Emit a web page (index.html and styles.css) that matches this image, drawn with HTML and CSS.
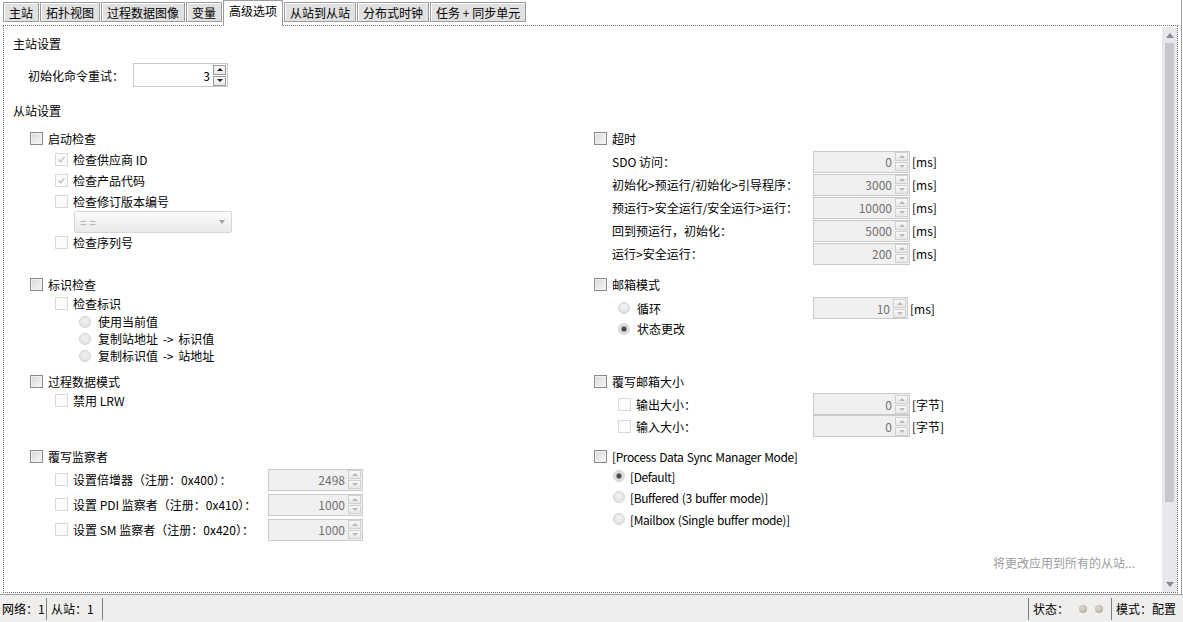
FILE: index.html
```html
<!DOCTYPE html>
<html lang="zh-CN">
<head>
  <meta charset="UTF-8">
  <meta name="viewport" content="width=device-width, initial-scale=1.0">
  <title>高级选项</title>
  <link rel="stylesheet" href="styles.css">
</head>
<body>
  <div class="window">
    <div class="tabs">
      <div class="tab">主站</div>
      <div class="tab">拓扑视图</div>
      <div class="tab">过程数据图像</div>
      <div class="tab">变量</div>
      <div class="tab active">高级选项</div>
      <div class="tab">从站到从站</div>
      <div class="tab">分布式时钟</div>
      <div class="tab">任务&nbsp;+&nbsp;同步单元</div>
    </div>

    <div class="main">
      <div class="panel">
        <div class="content">
          <div class="section-title">主站设置</div>
          <div class="master-row">
            <span class="master-label">初始化命令重试：</span>
            <div class="spin enabled"><span class="val">3</span><span class="btns"><i class="up"></i><i class="down"></i></span></div>
          </div>

          <div class="section-title slave-title">从站设置</div>

          <div class="groups">
            <!-- startup checks -->
            <div class="cell">
              <div class="line h20"><span class="cb"></span>启动检查</div>
              <div class="line h22 sub"><span class="cb off"><svg viewBox="0 0 13 13"><polyline points="3,6.5 5.5,9.2 10,3.6"/></svg></span>检查供应商 ID</div>
              <div class="line h21 sub"><span class="cb off"><svg viewBox="0 0 13 13"><polyline points="3,6.5 5.5,9.2 10,3.6"/></svg></span>检查产品代码</div>
              <div class="line h20 sub"><span class="cb off"></span>检查修订版本编号</div>
              <div class="line h21 combo-row"><div class="combo"><span>= =</span><i></i></div></div>
              <div class="line h20 sub"><span class="cb off"></span>检查序列号</div>
            </div>
            <div class="cell">
              <div class="line h20"><span class="cb"></span>超时</div>
              <div class="line h23 field first"><span class="lbl w201">SDO 访问：</span><div class="spin w97"><span class="val">0</span><span class="btns"><i class="up"></i><i class="down"></i></span></div><span class="unit">[ms]</span></div>
              <div class="line h23 field"><span class="lbl w201">初始化&gt;预运行/初始化&gt;引导程序：</span><div class="spin w97"><span class="val">3000</span><span class="btns"><i class="up"></i><i class="down"></i></span></div><span class="unit">[ms]</span></div>
              <div class="line h23 field"><span class="lbl w201">预运行&gt;安全运行/安全运行&gt;运行：</span><div class="spin w97"><span class="val">10000</span><span class="btns"><i class="up"></i><i class="down"></i></span></div><span class="unit">[ms]</span></div>
              <div class="line h23 field"><span class="lbl w201">回到预运行，初始化：</span><div class="spin w97"><span class="val">5000</span><span class="btns"><i class="up"></i><i class="down"></i></span></div><span class="unit">[ms]</span></div>
              <div class="line h23 field"><span class="lbl w201">运行&gt;安全运行：</span><div class="spin w97"><span class="val">200</span><span class="btns"><i class="up"></i><i class="down"></i></span></div><span class="unit">[ms]</span></div>
            </div>

            <!-- identification / mailbox -->
            <div class="cell">
              <div class="line h20"><span class="cb"></span>标识检查</div>
              <div class="line h19 sub"><span class="cb off"></span>检查标识</div>
              <div class="line h17 sub2"><span class="rb"></span>使用当前值</div>
              <div class="line h17 sub2 wide"><span class="rb"></span>复制站地址 -&gt; 标识值</div>
              <div class="line h17 sub2 wide"><span class="rb"></span>复制标识值 -&gt; 站地址</div>
            </div>
            <div class="cell">
              <div class="line h20"><span class="cb"></span>邮箱模式</div>
              <div class="line h22 rsub gap3"><span class="rb"></span><span class="lbl w176">循环</span><div class="spin w95"><span class="val">10</span><span class="btns"><i class="up"></i><i class="down"></i></span></div><span class="unit">[ms]</span></div>
              <div class="line h19 rsub"><span class="rb sel"></span>状态更改</div>
            </div>

            <!-- process data / mailbox size -->
            <div class="cell">
              <div class="line h20"><span class="cb"></span>过程数据模式</div>
              <div class="line h19 sub"><span class="cb off"></span>禁用 LRW</div>
            </div>
            <div class="cell">
              <div class="line h20"><span class="cb"></span>覆写邮箱大小</div>
              <div class="line h22 rsub first"><span class="cb off"></span><span class="lbl w177">输出大小：</span><div class="spin w97"><span class="val">0</span><span class="btns"><i class="up"></i><i class="down"></i></span></div><span class="unit">[字节]</span></div>
              <div class="line h22 rsub"><span class="cb off"></span><span class="lbl w177">输入大小：</span><div class="spin w97"><span class="val">0</span><span class="btns"><i class="up"></i><i class="down"></i></span></div><span class="unit">[字节]</span></div>
            </div>

            <!-- watchdog / sync manager -->
            <div class="cell">
              <div class="line h20"><span class="cb"></span>覆写监察者</div>
              <div class="line h25 sub gap1"><span class="cb off"></span><span class="lbl w195">设置倍增器（注册：0x400）：</span><div class="spin w95"><span class="val">2498</span><span class="btns"><i class="up"></i><i class="down"></i></span></div></div>
              <div class="line h25 sub"><span class="cb off"></span><span class="lbl w195">设置 PDI 监察者（注册：0x410）：</span><div class="spin w95"><span class="val">1000</span><span class="btns"><i class="up"></i><i class="down"></i></span></div></div>
              <div class="line h25 sub"><span class="cb off"></span><span class="lbl w195">设置 SM 监察者（注册：0x420）：</span><div class="spin w95"><span class="val">1000</span><span class="btns"><i class="up"></i><i class="down"></i></span></div></div>
            </div>
            <div class="cell">
              <div class="line h20 latin"><span class="cb"></span>[Process Data Sync Manager Mode]</div>
              <div class="line h20 rsub2 latin"><span class="rb sel"></span>[Default]</div>
              <div class="line h22 rsub2 latin"><span class="rb"></span>[Buffered (3 buffer mode)]</div>
              <div class="line h22 rsub2 latin"><span class="rb"></span>[Mailbox (Single buffer mode)]</div>
            </div>
          </div>

          <div class="apply">将更改应用到所有的从站...</div>
        </div>

        <div class="vscroll">
          <div class="arrow up"></div>
          <div class="thumb"></div>
          <div class="track"></div>
          <div class="arrow down"></div>
        </div>
      </div>
    </div>
  </div>

  <div class="status">
    <div class="st-item net">网络：1</div>
    <div class="st-item slaves">从站：1</div>
    <div class="st-item state">状态：<span class="dot"></span><span class="dot"></span></div>
    <div class="st-item mode">模式：配置</div>
  </div>
</body>
</html>
```

FILE: styles.css
```css
body {
  margin: 0;
  width: 1183px;
  height: 622px;
  overflow: hidden;
  background: #fff;
  color: #000;
  font-family: "Noto Sans CJK SC", "Noto Sans", sans-serif;
  font-size: 12px;
}

.window {
  width: 1182px;
  height: 594px;
  box-sizing: border-box;
  border-right: 1px solid #a0a0a0;
}

/* tabs */
.tabs {
  display: flex;
  align-items: flex-start;
  height: 25px;
  padding-left: 3px;
}

.tab {
  height: 20px;
  margin-top: 2px;
  margin-right: 1px;
  padding: 0 5px;
  box-sizing: border-box;
  line-height: 19px;
  border: 1px solid #9c9c9c;
  background: #e1e1e1;
  box-shadow: inset 1px 1px 0 #fff;
  white-space: nowrap;
}

.tab.active {
  height: 26px;
  margin-top: 0;
  line-height: 19px;
  border-bottom: none;
  background: #fff;
  box-shadow: none;
  position: relative;
  z-index: 1;
}

/* main panel */
.main {
  height: 569px;
}

.panel {
  display: flex;
  width: 1175px;
  height: 568px;
  margin-left: 3px;
  box-sizing: border-box;
  border: 1px dotted #6f6f6f;
}

.content {
  flex: 1;
  padding: 10px 0 0 9px;
}

.section-title {
  height: 16px;
  line-height: 16px;
}

.slave-title {
  margin-top: 16px;
}

.master-row {
  display: flex;
  align-items: center;
  height: 24px;
  margin-top: 11px;
  padding-left: 15px;
}

.master-label {
  width: 105px;
}

.groups {
  display: grid;
  grid-template-columns: 564px 1fr;
  grid-template-rows: 146px 97px 75px auto;
  margin-top: 9px;
}

.cell {
  padding-left: 17px;
}

.line {
  display: flex;
  align-items: center;
  white-space: pre;
}

.latin {
  letter-spacing: -0.4px;
  word-spacing: 1px;
}

.wide {
  word-spacing: 2px;
}

.h17 { height: 17px; }
.h19 { height: 19px; }
.h20 { height: 20px; }
.h21 { height: 21px; }
.h22 { height: 22px; }
.h23 { height: 23px; }
.h25 { height: 25px; }

.first { margin-top: 2px; }
.gap1 { margin-top: 1px; }
.gap3 { margin-top: 3px; }

.sub { padding-left: 25px; }
.sub2 { padding-left: 49px; }
.combo-row { padding-left: 44px; }
.field { padding-left: 18px; }
.rsub { padding-left: 24px; }
.rsub2 { padding-left: 19px; }

.lbl { flex: none; }
.w176 { width: 176px; }
.w177 { width: 177px; }
.w195 { width: 195px; }
.w201 { width: 201px; }

/* checkbox */
.cb {
  flex: none;
  display: flex;
  width: 13px;
  height: 13px;
  margin-right: 5px;
  box-sizing: border-box;
  border: 1px solid #8a8a8a;
  background: linear-gradient(135deg, #d8d8d8, #f7f7f7);
  box-shadow: inset 0 0 0 1px #f2f2f2;
}

.cb.off {
  border-color: #d8d8d8;
  background: #fbfbfb;
  box-shadow: none;
}

.cb svg {
  width: 11px;
  height: 11px;
}

.cb polyline {
  fill: none;
  stroke: #b3b8c6;
  stroke-width: 1.4;
}

/* radio */
.rb {
  flex: none;
  width: 12px;
  height: 12px;
  margin-right: 7px;
  box-sizing: border-box;
  border-radius: 50%;
  border: 1px solid #d2d2d2;
  background: radial-gradient(circle at 50% 40%, #f2f2f2, #dedede);
}

.rsub2 .rb {
  margin-right: 5px;
}

.rb.sel {
  background: radial-gradient(circle, #4a4a4a 0 1.8px, #9a9a9a 2.6px, #e2e2e2 3.6px);
}

/* combo */
.combo {
  display: flex;
  align-items: center;
  justify-content: space-between;
  width: 158px;
  height: 22px;
  box-sizing: border-box;
  padding: 0 6px 0 5px;
  border: 1px solid #d6d6d6;
  border-radius: 2px;
  background: linear-gradient(#fbfbfb, #e9e9e9);
  color: #aaa;
}

.combo i {
  border-left: 3px solid transparent;
  border-right: 3px solid transparent;
  border-top: 4px solid #a0a0a0;
}

/* spin box */
.spin {
  flex: none;
  display: flex;
  align-items: center;
  height: 22px;
  box-sizing: border-box;
  padding-right: 1px;
  border: 1px solid #cacaca;
  background: #f0f0f0;
  color: #707070;
}

.spin.enabled {
  width: 95px;
  height: 24px;
  background: #fff;
  color: #000;
  border-color: #c9c9c9;
}

.w95 { width: 95px; }
.w97 { width: 97px; }

.val {
  flex: 1;
  text-align: right;
  padding-right: 3px;
}

.btns {
  display: flex;
  flex-direction: column;
  gap: 1px;
}

.btns i {
  display: flex;
  align-items: center;
  justify-content: center;
  width: 13px;
  height: 9px;
  box-sizing: border-box;
  border: 1px solid #d0d0d0;
  background: linear-gradient(#f8f8f8, #e8e8e8);
}

.btns i::before {
  content: "";
  border-left: 3px solid transparent;
  border-right: 3px solid transparent;
}

.btns .up::before { border-bottom: 3px solid #b8b8b8; }
.btns .down::before { border-top: 3px solid #b8b8b8; }

.enabled .btns i {
  height: 10px;
  border-color: #9a9a9a;
}

.enabled .btns .up::before { border-bottom-color: #1e1e1e; }
.enabled .btns .down::before { border-top-color: #1e1e1e; }

.unit {
  margin-left: 2px;
}

.apply {
  margin-top: 13px;
  padding-right: 27px;
  height: 16px;
  line-height: 16px;
  text-align: right;
  color: #9c9c9c;
}

/* scrollbar */
.vscroll {
  display: flex;
  flex-direction: column;
  align-items: center;
  width: 15px;
  margin-top: 1px;
  background: #e8e8ec;
}

.arrow {
  display: flex;
  align-items: center;
  justify-content: center;
  width: 15px;
  height: 16px;
  flex: none;
}

.arrow::before {
  content: "";
  border-left: 4px solid transparent;
  border-right: 4px solid transparent;
}

.arrow.up::before { border-bottom: 5px solid #868896; }
.arrow.down::before { border-top: 5px solid #868896; }

.thumb {
  width: 9px;
  height: 459px;
  background: #c6c7cd;
}

.track {
  flex: 1;
}

/* status bar */
.status {
  display: flex;
  align-items: center;
  height: 28px;
  box-sizing: border-box;
  border-top: 1px solid #a0a0a0;
  background: #f0eeec;
}

.st-item {
  height: 22px;
  line-height: 22px;
  box-sizing: border-box;
  white-space: nowrap;
}

.net {
  width: 47px;
  padding-left: 2px;
  border-right: 1px solid #7c7c7c;
}

.slaves {
  width: 56px;
  padding-left: 4px;
  border-right: 1px solid #7c7c7c;
}

.state {
  display: flex;
  align-items: center;
  width: 84px;
  margin-left: auto;
  padding-left: 4px;
  border-left: 1px solid #7c7c7c;
  border-right: 1px solid #7c7c7c;
}

.dot {
  width: 8px;
  height: 8px;
  margin-left: 8px;
  border-radius: 50%;
  background: radial-gradient(circle at 40% 35%, #dcd8cc, #a8a394);
}

.state .dot:first-of-type {
  margin-left: 10px;
}

.mode {
  width: 71px;
  padding-left: 4px;
}
```
